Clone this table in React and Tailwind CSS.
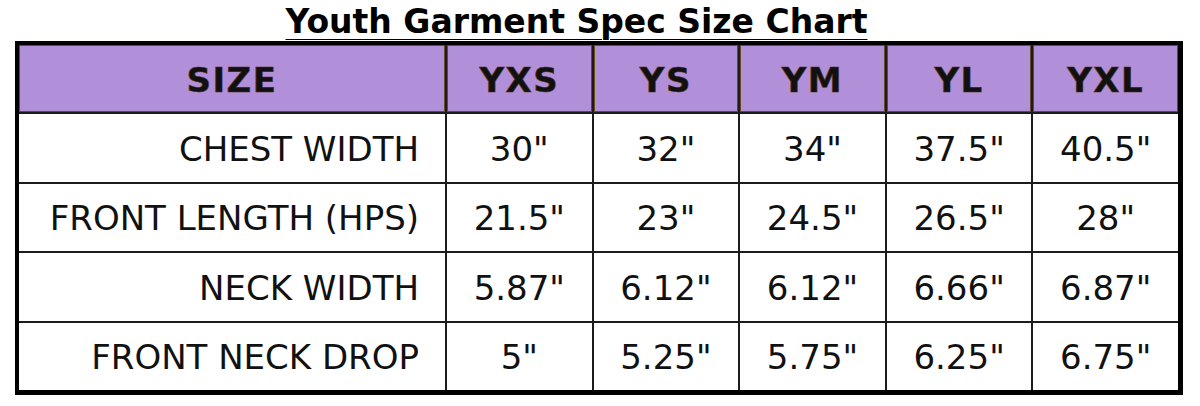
import React from "react";

const headers = ["SIZE", "YXS", "YS", "YM", "YL", "YXL"];
const rows = [
  ["CHEST WIDTH", '30"', '32"', '34"', '37.5"', '40.5"'],
  ["FRONT LENGTH (HPS)", '21.5"', '23"', '24.5"', '26.5"', '28"'],
  ["NECK WIDTH", '5.87"', '6.12"', '6.12"', '6.66"', '6.87"'],
  ["FRONT NECK DROP", '5"', '5.25"', '5.75"', '6.25"', '6.75"'],
];

export default function App() {
  return (
    <div
      className="w-[1200px] h-[406px] bg-white text-black"
      style={{ fontFamily: '"DejaVu Sans", Verdana, sans-serif' }}
    >
      <div className="w-[1153px] h-[41px] pt-[2px] text-center leading-[39px] text-[33px] font-bold">
        <span className="underline decoration-1 underline-offset-[6px]">Youth Garment Spec Size Chart</span>
      </div>
      <div className="ml-[15px] w-[1168px] border-l-4 border-t-4 border-r-[5px] border-b-[5px] border-black">
        <div className="grid h-[345px] grid-cols-[426px_repeat(5,1fr)] grid-rows-5 gap-[2px] bg-[#1c1c1c]">
          {headers.map((h) => (
            <div
              key={h}
              className="flex items-center justify-center bg-[#b18fd9] pt-[3px] shadow-[inset_0_0_0_1px_#6b4a22] text-[34px] tracking-[1.5px] font-bold text-[#111] [-webkit-text-stroke:0.6px_#4a2e0e]"
            >
              {h}
            </div>
          ))}
          {rows.map((r) =>
            r.map((c, i) => (
              <div
                key={r[0] + i}
                className={
                  i === 0
                    ? "flex items-center justify-end bg-white pt-[3px] pr-[26px] text-[34px] text-[#111]"
                    : "flex items-center justify-center bg-white pt-[3px] text-[34px] text-[#111]"
                }
              >
                {c}
              </div>
            ))
          )}
        </div>
      </div>
    </div>
  );
}
